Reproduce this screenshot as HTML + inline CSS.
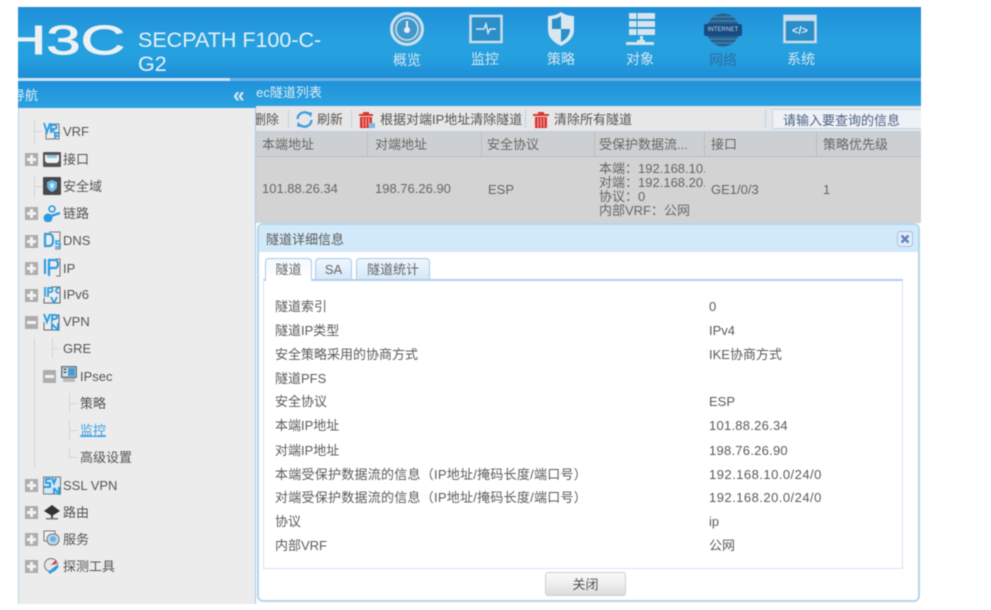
<!DOCTYPE html>
<html lang="zh">
<head>
<meta charset="utf-8">
<title>SECPATH F100-C-G2</title>
<style>
html,body{margin:0;padding:0;background:#fff}
body{width:991px;height:610px;overflow:hidden;position:relative;font-family:"Liberation Sans","Noto Sans CJK SC",sans-serif;font-size:13px;color:#555}
#app{position:absolute;left:0;top:0;width:991px;height:610px;overflow:hidden;filter:blur(.5px)}
#app div,#app span,#app svg{position:absolute}
i{font-style:normal;font-family:"Noto Sans CJK TC",sans-serif}
.t{white-space:nowrap;line-height:20px;height:20px;transform:translateY(1px)}
.c{text-align:center;width:60px;font-size:14px;color:#d5e6f2;top:49px}
.n{left:63px;color:#555}
.p{background:#adadad;width:13px;height:13px}
.p:before{content:"";position:absolute;left:2px;top:5px;width:9px;height:3px;background:#f2f2f2}
.pl:after{content:"";position:absolute;left:5px;top:2px;width:3px;height:9px;background:#f2f2f2}
.v{width:1px;background:#d4d4d4}
.h{height:1px;background:#d4d4d4}
.s{width:1px;height:18px;background:#b9d2e4;top:110px}
.th{top:134px;color:#666}
.td{color:#666}
.l{left:275px;color:#5b5b5b}
.r{left:709px;color:#5b5b5b}
.w{letter-spacing:.25px}
.x{letter-spacing:.47px}
.tab{top:258px;height:21px;box-sizing:border-box;border:1px solid #a9c8ea;border-bottom:none;border-radius:4px 4px 0 0;background:linear-gradient(#eef6fd,#d7e8f8);text-align:center;line-height:22px;color:#666}
</style>
</head>
<body>
<div id="app">
<!-- header -->
<div style="left:18px;top:7px;width:903px;height:72px;background:linear-gradient(#1f8fd8 0,#27a0df 45%,#25a0df 70%,#1d8cd5 100%)"></div>
<div style="left:18px;top:78px;width:903px;height:3px;background:#6fb0e2"></div>
<div style="left:18px;top:78px;width:212px;height:3px;background:#cfe3f3"></div>

<div style="left:18px;top:7px;width:110px;height:60px;overflow:hidden">
<span style="left:-16px;top:10px;font:400 41px/46px 'Liberation Sans',sans-serif;-webkit-text-stroke:.9px #eef1f3;color:#eef1f3;transform:scaleX(1.5);transform-origin:0 0;white-space:nowrap">H3C</span>
</div>
<div class="t" style="left:138px;top:27px;font-size:21.5px;line-height:24px;height:24px;color:#e6f1f8">SECPATH F100-C-</div>
<div class="t" style="left:138px;top:51px;font-size:21.5px;line-height:24px;height:24px;color:#e6f1f8">G2</div>

<!-- top nav icons -->
<svg style="left:388px;top:11px" width="38" height="36" viewBox="0 0 38 36"><circle cx="19" cy="18" r="15.500" fill="#4a9fd0" stroke="#cfe0ea" stroke-width="3"/><circle cx="19" cy="18" r="11" fill="#3f97cb" stroke="#cfe0ea" stroke-width="1.500"/><circle cx="19" cy="19" r="3" fill="#e8f0f5"/><path d="M19 10v7" stroke="#e8f0f5" stroke-width="2"/></svg>
<svg style="left:468px;top:13px" width="36" height="32" viewBox="0 0 36 32"><rect x="2.500" y="3" width="31" height="26" fill="#2a8ec9" stroke="#cbdde8" stroke-width="2.500"/><path d="M8 16h8l2-5 2 9 2-4h6" fill="none" stroke="#dce8ef" stroke-width="1.500"/></svg>
<svg style="left:543px;top:10px" width="36" height="38" viewBox="0 0 36 38"><path d="M18 2c4 3 9 4 13 4v14c0 8-7 13-13 16C12 33 5 28 5 20V6c4 0 9-1 13-4z" fill="#d8e7f0"/><path d="M18 6v13H9V9c3 0 6-1 9-3zM18 19h9c0 7-5 11-9 13z" fill="#2a8ec9"/></svg>
<svg style="left:624px;top:11px" width="34" height="36" viewBox="0 0 34 36"><g fill="#d5e4ed"><rect x="5" y="2" width="26" height="6"/><rect x="5" y="10" width="26" height="6"/><rect x="5" y="18" width="26" height="6"/><rect x="16" y="25" width="3" height="5"/><rect x="2" y="31" width="28" height="3"/><rect x="13" y="29" width="8" height="5"/></g><path d="M13 2v22" stroke="#2a8ec9" stroke-width="1"/></svg>
<svg style="left:701px;top:13px" width="44" height="34" viewBox="0 0 44 34"><circle cx="22" cy="17" r="16.500" fill="#27608f"/><path d="M12 4h20M8 8h28M8 26h28M12 30h20" stroke="#4d88b4" stroke-width="1"/><rect x="3" y="11" width="38" height="12" rx="2" fill="#174c80"/></svg>
<div class="t" style="left:706px;top:19px;width:34px;text-align:center;font-size:6px;color:#c7d8e6;letter-spacing:.1px">INTERNET</div>
<svg style="left:782px;top:13px" width="36" height="32" viewBox="0 0 36 32"><rect x="2.500" y="3" width="31" height="26" fill="#2a8ec9" stroke="#cbdde8" stroke-width="2.500"/><rect x="3" y="3" width="30" height="5" fill="#cbdde8"/></svg>
<div class="t" style="left:782px;top:20px;width:36px;text-align:center;font-size:11px;font-weight:bold;color:#e3edf3">&lt;/&gt;</div>

<div class="t c" style="left:377px">概览</div>
<div class="t c" style="left:455px;top:48px">监控</div>
<div class="t c" style="left:531px;top:48px">策略</div>
<div class="t c" style="left:610px;top:48px">对象</div>
<div class="t c" style="left:693px;color:#2f6f9f">网络</div>
<div class="t c" style="left:771px;top:48px">系统</div>

<!-- left nav -->
<div style="left:18px;top:81px;width:238px;height:28px;background:linear-gradient(#1f92da,#2ba2e1);border-bottom:1px solid #9cc4e6;box-sizing:border-box"></div>
<div style="left:18px;top:85px;width:40px;height:22px;overflow:hidden"><span class="t" style="left:-6px;top:0;font-size:13px;color:#e4eff7">导航</span></div>
<div class="t" style="left:233px;top:85px;font-size:21px;font-weight:bold;color:#dbe8f2">«</div>
<div style="left:18px;top:108px;width:238px;height:496px;background:#ececec;border-left:1px solid #b8d4e8;border-right:1px solid #a9c9e4;box-sizing:border-box"></div>

<div class="v" style="left:34px;top:120px;height:24px"></div><div class="h" style="left:35px;top:131px;width:8px"></div>
<div class="v" style="left:34px;top:176px;height:22px"></div><div class="h" style="left:35px;top:186px;width:8px"></div>
<div class="v" style="left:34px;top:338px;height:130px"></div>
<div class="v" style="left:52px;top:338px;height:20px"></div><div class="h" style="left:52px;top:348px;width:8px"></div>
<div class="v" style="left:69px;top:393px;height:20px"></div><div class="h" style="left:69px;top:403px;width:8px"></div>
<div class="v" style="left:69px;top:420px;height:20px"></div><div class="h" style="left:69px;top:430px;width:8px"></div>
<div class="v" style="left:69px;top:447px;height:10px"></div><div class="h" style="left:69px;top:457px;width:8px"></div>

<div class="p pl" style="top:153px;left:25px"></div>
<div class="p pl" style="top:207px;left:25px"></div>
<div class="p pl" style="top:235px;left:25px"></div>
<div class="p pl" style="top:262px;left:25px"></div>
<div class="p pl" style="top:289px;left:25px"></div>
<div class="p" style="top:316px;left:25px"></div>
<div class="p" style="top:370px;left:43px"></div>
<div class="p pl" style="top:479px;left:25px"></div>
<div class="p pl" style="top:506px;left:25px"></div>
<div class="p pl" style="top:533px;left:25px"></div>
<div class="p pl" style="top:560px;left:25px"></div>

<!-- tree icons -->
<svg style="left:43px;top:122px" width="18" height="18" viewBox="0 0 18 18"><path d="M6 2h10v15H3V8" fill="none" stroke="#777" stroke-width="1"/><path d="M1 1l3 9 3-9M8 11V3h4c2 0 2 4 0 4H8l5 5M12 11h5M12 11v6M12 14h4" fill="none" stroke="#34a0e2" stroke-width="1.900"/></svg>
<svg style="left:43px;top:152px" width="18" height="15" viewBox="0 0 18 15"><rect x="0" y="0" width="18" height="15" rx="1" fill="#555"/><path d="M2 3h14v6l-2 2H4L2 9z" fill="#eef4f8"/><rect x="4" y="3" width="10" height="3" fill="#8cc4e8"/></svg>
<svg style="left:43px;top:177px" width="18" height="18" viewBox="0 0 18 18"><rect width="18" height="18" rx="1" fill="#484848"/><path d="M9 3l5 2v4c0 3-3 5-5 6-2-1-5-3-5-6V5z" fill="#6bb5e6"/><path d="M9 6l2 1v2c0 1-1 2-2 3-1-1-2-2-2-3V7z" fill="#cfe6f6"/></svg>
<svg style="left:43px;top:204px" width="18" height="18" viewBox="0 0 18 18"><circle cx="5" cy="14" r="4.500" fill="#2a9be0"/><circle cx="9" cy="5" r="3" fill="none" stroke="#2a9be0" stroke-width="1.600"/><path d="M8 12l9-3" stroke="#2a9be0" stroke-width="2.400"/></svg>
<svg style="left:43px;top:231px" width="18" height="19" viewBox="0 0 18 19"><path d="M6 1h11v17H12" fill="none" stroke="#777"/><path d="M2 3h4c3 0 4 2 4 6s-1 6-4 6H2z" fill="none" stroke="#2e9de2" stroke-width="2.200"/><path d="M17 10h-4v3h4v3h-5" fill="none" stroke="#2e9de2" stroke-width="1.600"/></svg>
<svg style="left:43px;top:258px" width="18" height="19" viewBox="0 0 18 19"><path d="M2 1v15M6 18V2h6c2 0 3 2 3 4s-1 4-3 4H6" fill="none" stroke="#2e9de2" stroke-width="2.200"/><path d="M13 1h4v17h-4" fill="none" stroke="#777"/></svg>
<svg style="left:43px;top:286px" width="18" height="18" viewBox="0 0 18 18"><path d="M8 1h9v16H1v-5" fill="none" stroke="#666"/><path d="M2 1v10M5 11V2h3c2 0 2 4 0 4H5M8 11l3 6 3-6M16 2c-4 0-4 5 0 5" fill="none" stroke="#2e9de2" stroke-width="1.800"/></svg>
<svg style="left:43px;top:313px" width="18" height="18" viewBox="0 0 18 18"><path d="M8 2h8v15H1V9" fill="none" stroke="#666"/><path d="M1 1l3 8 3-8M9 9V2h3c3 0 3 4 0 4H9M9 17v-6l6 6v-7" fill="none" stroke="#2e9de2" stroke-width="1.900"/></svg>
<svg style="left:60px;top:365px" width="18" height="18" viewBox="0 0 18 18"><rect x="3" y="5" width="12" height="12" fill="#bbb"/><rect x="1" y="1" width="16" height="12" fill="#6b7c88"/><rect x="2.500" y="2.500" width="13" height="9" fill="#d8e4ec"/><rect x="8" y="3" width="7" height="8" fill="#4a9bd4"/><rect x="3.500" y="3.500" width="3" height="1.500" fill="#556"/><rect x="3.500" y="6.500" width="3" height="1.500" fill="#556"/></svg>
<svg style="left:43px;top:476px" width="18" height="19" viewBox="0 0 18 19"><rect x="0.500" y="1" width="17" height="17" fill="#d4e8f6" stroke="#777"/><path d="M8 3H3v4h4v4H1M9 2l2 5 2-5M11 12v6M11 12l5 6v-7" fill="none" stroke="#2e9de2" stroke-width="2"/></svg>
<svg style="left:43px;top:503px" width="18" height="18" viewBox="0 0 18 18"><path d="M9 2l8 6-8 5-8-5z" fill="#333"/><rect x="8" y="11" width="2" height="4" fill="#444"/><rect x="3" y="15" width="12" height="1.500" fill="#777"/></svg>
<svg style="left:43px;top:530px" width="18" height="18" viewBox="0 0 18 18"><rect x="1" y="1" width="11" height="10" fill="#f3f3f3" stroke="#777"/><rect x="4" y="4" width="12" height="11" rx="5" fill="#bcd9ec" stroke="#777"/><circle cx="10" cy="9" r="3" fill="#6cb3e2"/></svg>
<svg style="left:43px;top:557px" width="18" height="18" viewBox="0 0 18 18"><circle cx="8" cy="8" r="6.500" fill="#e7e7e7" stroke="#777"/><path d="M8 8l5-5v4z" fill="#e02c2c"/><path d="M6 16l9-7" stroke="#2e9de2" stroke-width="3"/></svg>

<div class="t n" style="top:121px">VRF</div>
<div class="t n" style="top:149px">接口</div>
<div class="t n" style="top:176px">安全域</div>
<div class="t n" style="top:203px">链路</div>
<div class="t n" style="top:230px">DNS</div>
<div class="t n" style="top:258px">IP</div>
<div class="t n" style="top:284px">IPv6</div>
<div class="t n" style="top:311px">VPN</div>
<div class="t n" style="top:338px">GRE</div>
<div class="t" style="left:80px;top:366px">IPsec</div>
<div class="t" style="left:80px;top:393px">策略</div>
<div class="t" style="left:80px;top:420px;color:#3f9fe2;text-decoration:underline">监控</div>
<div class="t" style="left:80px;top:447px">高级设置</div>
<div class="t n" style="top:475px">SSL VPN</div>
<div class="t n" style="top:502px">路由</div>
<div class="t n" style="top:529px">服务</div>
<div class="t n" style="top:556px">探测工具</div>

<!-- right header -->
<div style="left:256px;top:81px;width:665px;height:25px;background:linear-gradient(#1f92da,#2ba2e1)"></div>
<div style="left:256px;top:82px;width:120px;height:22px;overflow:hidden"><span class="t" style="left:-15px;top:0;color:#dfecf5">Psec隧道列表</span></div>

<!-- toolbar -->
<div style="left:256px;top:106px;width:665px;height:26px;background:#e7e7e7;border-bottom:1px solid #b9d2ea;box-sizing:border-box"></div>
<div style="left:256px;top:109px;width:30px;height:22px;overflow:hidden"><span class="t" style="left:-3px;top:0">删除</span></div>
<div class="s" style="left:288px"></div>
<svg style="left:295px;top:110px" width="19" height="19" viewBox="0 0 19 19"><path d="M2.500 9A7 7 0 0 1 14 4M16.500 10A7 7 0 0 1 5 15" fill="none" stroke="#3a9fe0" stroke-width="2.300"/><path d="M12 2l5 .5-1 5zM7 17l-5-.5 1-5z" fill="#3a9fe0"/></svg>
<div class="t" style="left:317px;top:109px">刷新</div>
<div class="s" style="left:351px"></div>
<svg style="left:359px;top:111px" width="16" height="18" viewBox="0 0 16 18"><path d="M0 3h14v2H0zM4 1h6v2H4zM1 6h12v11H1z" fill="#d9362f"/><path d="M4 7v9M7 7v9M10 7v9" stroke="#f3b0ac"/><rect x="10" y="12" width="6" height="5" fill="#7db8e4"/></svg>
<div class="t" style="left:380px;top:109px">根据对端IP地址清除隧道</div>
<div class="s" style="left:525px"></div>
<svg style="left:533px;top:111px" width="16" height="18" viewBox="0 0 16 18"><path d="M0 3h16v2H0zM5 1h6v2H5zM2 6h12v11H2z" fill="#d9362f"/><path d="M5 7v9M8 7v9M11 7v9" stroke="#f3b0ac"/></svg>
<div class="t" style="left:554px;top:109px">清除所有隧道</div>
<div class="s" style="left:765px"></div>
<div style="left:772px;top:109px;width:149px;height:20px;box-sizing:border-box;background:#eef2f6;border:1px solid #c4d4e4;border-right:none"></div>
<div class="t" style="left:783px;top:110px;color:#4f6284">请输入要查询的信息</div>

<!-- table -->
<div style="left:256px;top:132px;width:665px;height:25px;background:#cdd0d2;border-bottom:1px solid #bcbcbc;box-sizing:border-box"></div>
<div style="left:256px;top:157px;width:665px;height:66px;background:#d3d3d3"></div>
<div style="left:367px;top:132px;width:1px;height:24px;background:#bcbcbc"></div>
<div style="left:481px;top:132px;width:1px;height:24px;background:#bcbcbc"></div>
<div style="left:594px;top:132px;width:1px;height:24px;background:#bcbcbc"></div>
<div style="left:704px;top:132px;width:1px;height:24px;background:#bcbcbc"></div>
<div style="left:816px;top:132px;width:1px;height:24px;background:#bcbcbc"></div>
<div class="t th" style="left:262px">本端地址</div>
<div class="t th" style="left:375px">对端地址</div>
<div class="t th" style="left:487px">安全协议</div>
<div class="t th" style="left:599px">受保护数据流...</div>
<div class="t th" style="left:711px">接口</div>
<div class="t th" style="left:823px">策略优先级</div>
<div class="t td" style="left:262px;top:178px">101.88.26.34</div>
<div class="t td" style="left:375px;top:178px">198.76.26.90</div>
<div class="t td" style="left:488px;top:179px">ESP</div>
<div style="left:599px;top:162px;width:106px;height:60px;overflow:hidden;color:#666">
<span class="t" style="left:0;top:-2px;line-height:14px;height:14px">本端<i>：</i>192.168.10.0/24</span>
<span class="t" style="left:0;top:12px;line-height:14px;height:14px">对端<i>：</i>192.168.20.0/24</span>
<span class="t" style="left:0;top:26px;line-height:14px;height:14px">协议<i>：</i>0</span>
<span class="t" style="left:0;top:40px;line-height:14px;height:14px">内部VRF<i>：</i>公网</span>
</div>
<div class="t td" style="left:711px;top:179px">GE1/0/3</div>
<div class="t td" style="left:823px;top:179px">1</div>

<!-- dialog -->
<div style="left:257px;top:223px;width:663px;height:379px;box-sizing:border-box;background:#fff;border:2px solid #b5d6ec;border-radius:6px;overflow:hidden"></div>
<div style="left:259px;top:225px;width:659px;height:27px;background:#d2e9f9;border-radius:5px 5px 0 0"></div>
<div class="t" style="left:266px;top:229px;color:#5a5a5a">隧道详细信息</div>
<div style="left:897px;top:231px;width:16px;height:16px;box-sizing:border-box;background:#e3edf9;border:1px solid #a9bfe4;border-radius:3px"></div>
<svg style="left:899px;top:233px" width="12" height="12" viewBox="0 0 12 12"><path d="M2.500 2.500l7 7M9.500 2.500l-7 7" stroke="#5f7fc6" stroke-width="2.400"/></svg>

<div class="tab" style="left:265px;width:47px;background:linear-gradient(#f4f9fe,#fff);height:23px">隧道</div>
<div class="tab" style="left:315px;width:37px">SA</div>
<div class="tab" style="left:356px;width:74px">隧道统计</div>
<div style="left:263px;top:279px;width:640px;height:290px;box-sizing:border-box;border:1px solid #d5e6f8;border-top:2px solid #b4cfee"></div>
<div style="left:266px;top:278px;width:45px;height:3px;background:#fff"></div>

<div class="t l" style="top:296px">隧道索引</div><div class="t r" style="top:296px">0</div>
<div class="t l" style="top:320px">隧道IP类型</div><div class="t r" style="top:320px">IPv4</div>
<div class="t l" style="top:344px">安全策略采用的协商方式</div><div class="t r" style="top:344px">IKE协商方式</div>
<div class="t l" style="top:368px">隧道PFS</div>
<div class="t l" style="top:391px">安全协议</div><div class="t r" style="top:391px">ESP</div>
<div class="t l" style="top:415px">本端IP地址</div><div class="t r w" style="top:415px">101.88.26.34</div>
<div class="t l" style="top:440px">对端IP地址</div><div class="t r w" style="top:440px">198.76.26.90</div>
<div class="t l w" style="top:464px">本端受保护数据流的信息（IP地址/掩码长度/端口号）</div><div class="t r x" style="top:464px">192.168.10.0/24/0</div>
<div class="t l w" style="top:487px">对端受保护数据流的信息（IP地址/掩码长度/端口号）</div><div class="t r x" style="top:487px">192.168.20.0/24/0</div>
<div class="t l" style="top:511px">协议</div><div class="t r" style="top:511px">ip</div>
<div class="t l" style="top:535px">内部VRF</div><div class="t r" style="top:535px">公网</div>

<div style="left:545px;top:572px;width:81px;height:24px;box-sizing:border-box;border:1px solid #d0d0d0;border-radius:3px;background:linear-gradient(#fafafa,#f0f0f0 45%,#dcdcdc);text-align:center;line-height:23px;color:#555">关闭</div>
</div>
</body>
</html>
